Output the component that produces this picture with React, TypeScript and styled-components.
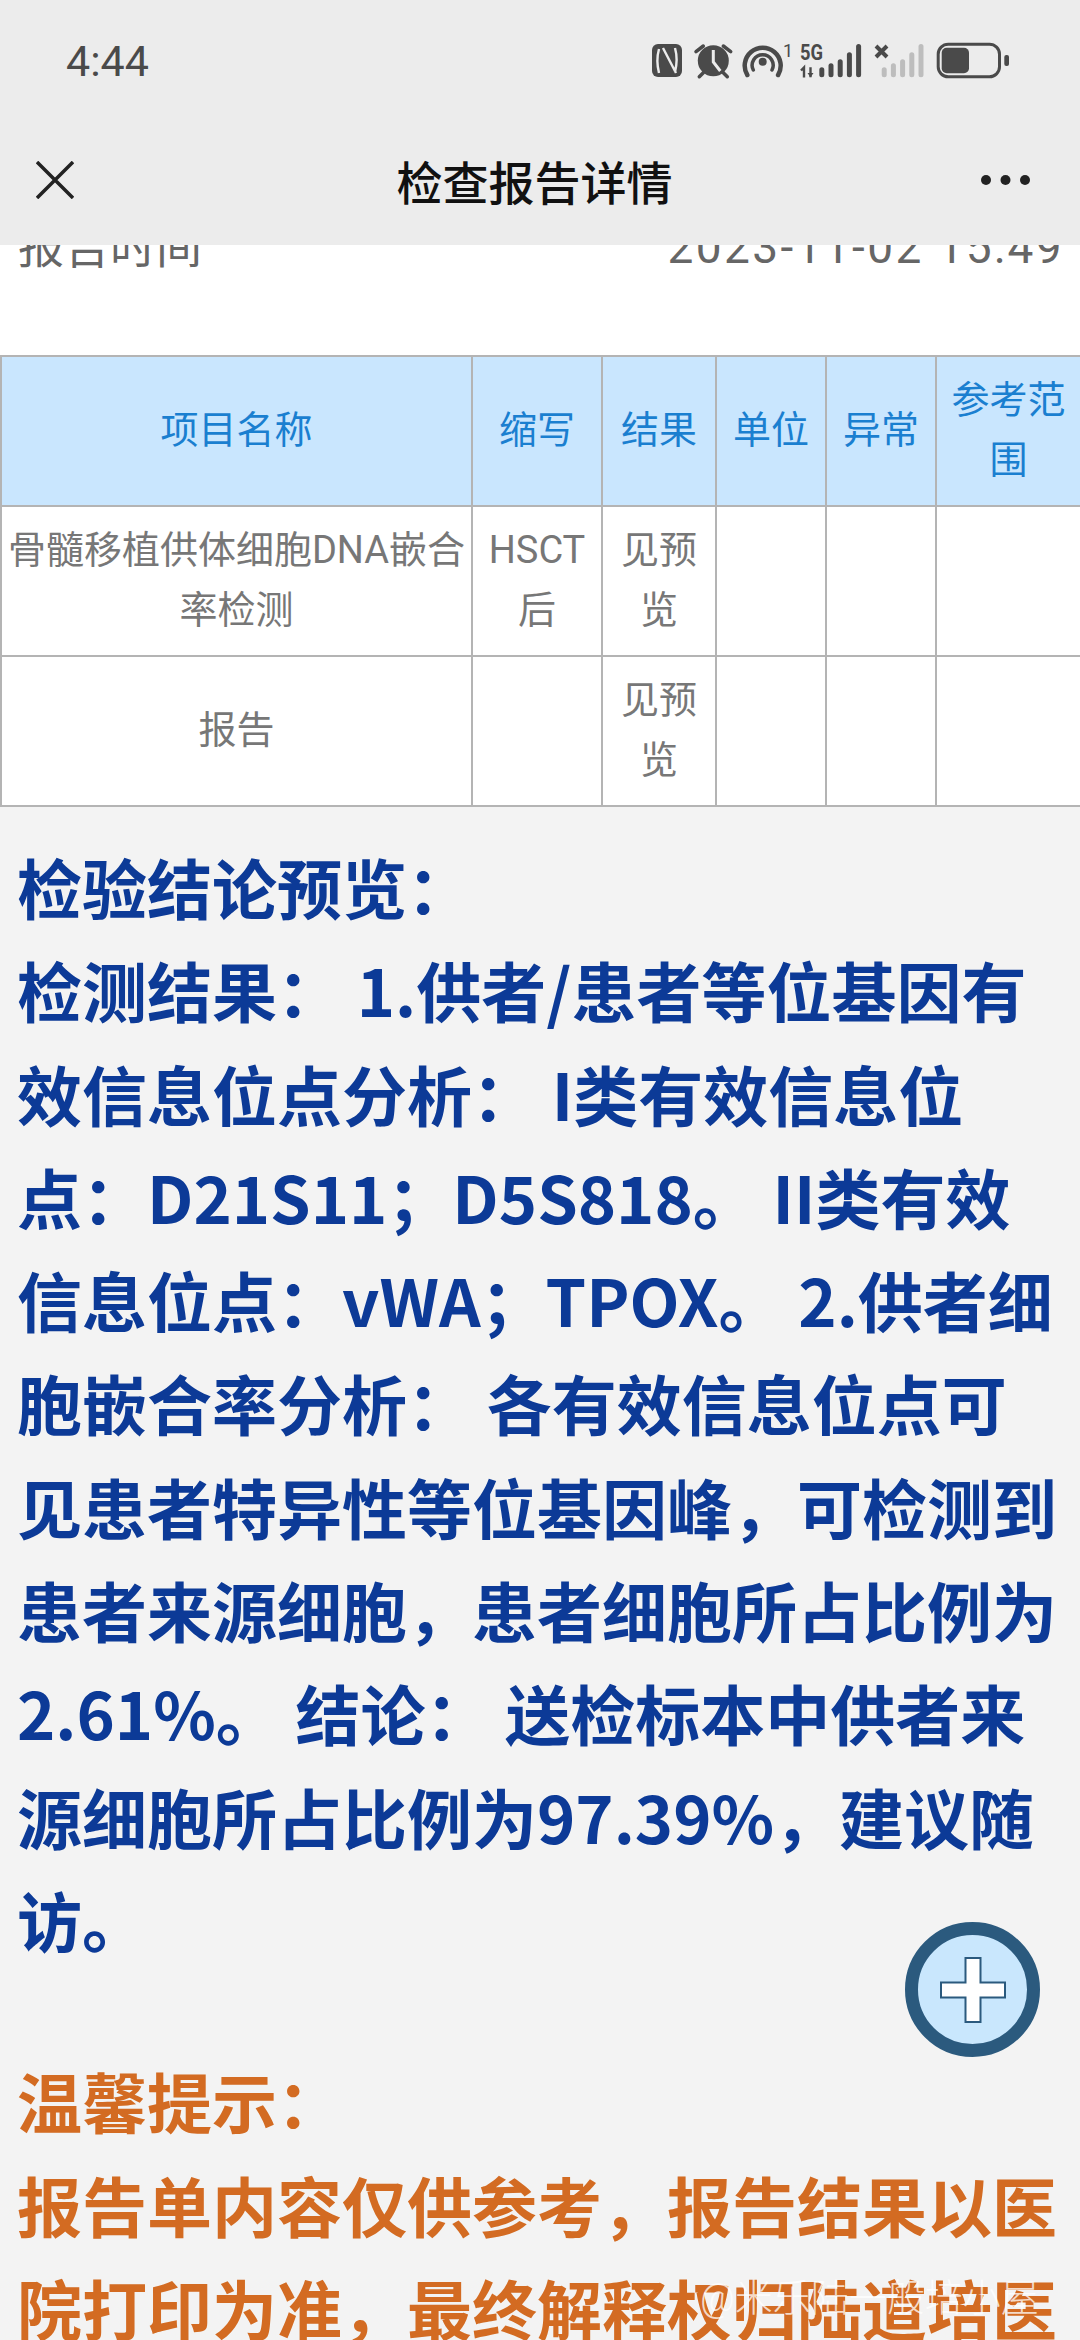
import styled, { createGlobalStyle } from "styled-components";

const GlobalStyle = createGlobalStyle`
  html, body { margin: 0; padding: 0; background: #f3f3f3; }
  body { font-family: "Roboto", "Noto Sans CJK SC", sans-serif; }
`;

const Page = styled.div`
  position: relative;
  width: 1080px;
  height: 2340px;
  overflow: hidden;
  display: flex;
  flex-direction: column;
  background: #f3f3f3;
`;
const TopBar = styled.header`
  position: relative;
  z-index: 2;
  flex: none;
  height: 245px;
  background: #ececec;
  display: flex;
  flex-direction: column;
`;
const StatusBar = styled.div`
  height: 122px;
  padding: 0 68px 0 66px;
  display: flex;
  align-items: center;
  justify-content: space-between;
`;
const Time = styled.span`
  font-family: "Roboto", sans-serif;
  font-size: 43px;
  color: #4a4a4a;
`;
const NavBar = styled.div`
  flex: 1;
  padding: 0 50px 8px 36px;
  display: flex;
  align-items: center;
  justify-content: space-between;
`;
const Title = styled.h1`
  margin: 0 0 0 14px;
  font-size: 46px;
  font-weight: 500;
  color: #111;
  font-family: "Noto Sans CJK SC", sans-serif;
`;
const Scroller = styled.main`
  flex: 1;
  min-height: 0;
  overflow: hidden;
`;
const InfoBlock = styled.section`
  margin-top: -28px;
  height: 138px;
  background: #fff;
  padding: 0 16px 0 18px;
  display: flex;
  justify-content: space-between;
  align-items: baseline;
  font-size: 46px;
  line-height: 60px;
  color: #666;
`;
const InfoValue = styled.span`
  letter-spacing: 2.4px;
`;
const ReportTable = styled.table`
  width: 1080px;
  table-layout: fixed;
  border-collapse: collapse;
  background: #fff;
`;
const HeadCell = styled.th`
  height: 150px;
  padding: 0 8px 2px;
  box-sizing: border-box;
  background: #c9e6fe;
  border: 2px solid #b4b4b4;
  color: #1a7fd0;
  font-size: 38px;
  font-weight: 400;
  line-height: 60px;
  text-align: center;
`;
const Cell = styled.td`
  height: 150px;
  padding: 0 3px 3px;
  box-sizing: border-box;
  border: 2px solid #b4b4b4;
  color: #777;
  font-size: 38px;
  line-height: 60px;
  text-align: center;
`;
const Notes = styled.section`
  padding: 28px 20px 0 17px;
`;
const NoteText = styled.p<{ $tone: string }>`
  margin: 0 0 78px;
  color: ${(p) => p.$tone};
  font-size: 65px;
  font-weight: 700;
  line-height: 103.3px;
  font-family: "Noto Sans CJK SC", sans-serif;
`;
const Fab = styled.button`
  position: absolute;
  z-index: 1;
  left: 905px;
  top: 1922px;
  width: 135px;
  height: 135px;
  padding: 0;
  box-sizing: border-box;
  border: 13px solid #2b5a7e;
  border-radius: 50%;
  background: #c9e7fd;
  display: flex;
  align-items: center;
  justify-content: center;
`;
const Watermark = styled.span`
  position: absolute;
  z-index: 1;
  left: 700px;
  top: 2279px;
  font-size: 38px;
  line-height: 38px;
  font-weight: 300;
  color: rgba(255, 255, 255, 0.75);
  white-space: nowrap;
`;

const iconFill = "#4a4a4a";
const idleFill = "#bdbdbd";
const barTops = [27.3, 23.3, 19.3, 12.3, 4];

function SignalBars({ x, color }: { x: number; color: string }) {
  return (
    <>
      {barTops.map((top, i) => (
        <rect key={i} x={x + i * 9.2} y={top} width="5" height={37.3 - top} rx="2.5" fill={color} />
      ))}
    </>
  );
}

function StatusIcons() {
  return (
    <svg width="362" height="42" viewBox="0 0 362 42" fill="none">
      {/* nfc */}
      <rect x="2" y="4" width="30" height="33" rx="6" fill={iconFill} />
      <path d="M9 9c-2 7-2 16 0 24M13 8l13 25M25 8c2 7 2 16 0 24" stroke="#ececec" strokeWidth="2.4" />
      {/* alarm */}
      <circle cx="63.3" cy="20.7" r="15.5" fill={iconFill} />
      <path d="M63.3 10v12l7 9" stroke="#ececec" strokeWidth="3" />
      <path d="M46 11.7L53.3 6M80.7 11.7L73.3 6M49.3 36.7l4-4M77.3 36.7l-4-4" stroke={iconFill} strokeWidth="3.5" strokeLinecap="round" />
      {/* hotspot */}
      <path d="M97.3 35a18 18 0 1 1 30.8 0" stroke={iconFill} strokeWidth="4.5" strokeLinecap="round" />
      <path d="M103.3 30a10.5 10.5 0 1 1 18.7 0" stroke={iconFill} strokeWidth="3.5" strokeLinecap="round" />
      <circle cx="112.7" cy="21.7" r="4" fill={iconFill} />
      <text x="133" y="17" fontSize="18" fill={iconFill} fontFamily="Roboto">1</text>
      {/* 5g signal */}
      <text x="150" y="20" fontSize="22" fontWeight="700" fill={iconFill} fontFamily="Roboto" textLength="23" lengthAdjust="spacingAndGlyphs">5G</text>
      <path d="M151 30.5l3-3v10M160.5 27.3v10" stroke={iconFill} strokeWidth="2.4" />
      <path d="M157.5 33h6l-3 4.3z" fill={iconFill} />
      <SignalBars x={169.3} color={iconFill} />
      {/* second sim, no service */}
      <path d="M226 6l11 11M237 6l-11 11" stroke={iconFill} strokeWidth="4" />
      <SignalBars x={231.7} color={idleFill} />
      {/* battery */}
      <rect x="288.2" y="4.2" width="61.3" height="32.6" rx="10" stroke={iconFill} strokeWidth="3" />
      <rect x="291.7" y="7.7" width="27.3" height="25.6" rx="5" fill={iconFill} />
      <rect x="354.3" y="15" width="4.7" height="11" rx="2" fill={iconFill} />
    </svg>
  );
}

const columns = [471, 130, 114, 110, 110, 145];

export default function App() {
  return (
    <>
      <GlobalStyle />
      <Page>
        <TopBar>
          <StatusBar>
            <Time>4:44</Time>
            <StatusIcons />
          </StatusBar>
          <NavBar>
            <svg width="38" height="38" viewBox="0 0 38 38">
              <path d="M1 1l36 36M37 1L1 37" stroke="#222" strokeWidth="3.5" />
            </svg>
            <Title>检查报告详情</Title>
            <svg width="49" height="10" viewBox="0 0 49 10" fill="#222">
              <circle cx="5" cy="5" r="5" />
              <circle cx="24.5" cy="5" r="5" />
              <circle cx="44" cy="5" r="5" />
            </svg>
          </NavBar>
        </TopBar>
        <Scroller>
          <InfoBlock>
            <span>报告时间</span>
            <InfoValue>2023-11-02 15:49</InfoValue>
          </InfoBlock>
          <ReportTable>
            <colgroup>
              {columns.map((w, i) => (
                <col key={i} style={{ width: w }} />
              ))}
            </colgroup>
            <thead>
              <tr>
                <HeadCell>项目名称</HeadCell>
                <HeadCell>缩写</HeadCell>
                <HeadCell>结果</HeadCell>
                <HeadCell>单位</HeadCell>
                <HeadCell>异常</HeadCell>
                <HeadCell>参考范围</HeadCell>
              </tr>
            </thead>
            <tbody>
              <tr>
                <Cell>骨髓移植供体细胞DNA嵌合率检测</Cell>
                <Cell>HSCT后</Cell>
                <Cell>见预览</Cell>
                <Cell />
                <Cell />
                <Cell />
              </tr>
              <tr>
                <Cell>报告</Cell>
                <Cell />
                <Cell>见预览</Cell>
                <Cell />
                <Cell />
                <Cell />
              </tr>
            </tbody>
          </ReportTable>
          <Notes>
            <NoteText $tone="#0c3a97">
              检验结论预览：
              <br />
              检测结果： 1.供者/患者等位基因有效信息位点分析： I类有效信息位点：D21S11；D5S818。 II类有效信息位点：vWA；TPOX。 2.供者细胞嵌合率分析： 各有效信息位点可见患者特异性等位基因峰，可检测到患者来源细胞，患者细胞所占比例为2.61%。 结论： 送检标本中供者来源细胞所占比例为97.39%，建议随访。
            </NoteText>
            <NoteText $tone="#d36b22">
              温馨提示：
              <br />
              报告单内容仅供参考，报告结果以医院打印为准，最终解释权归陆道培医院所有。
            </NoteText>
          </Notes>
        </Scroller>
        <Fab aria-label="add">
          <svg width="66" height="66" viewBox="0 0 66 66">
            <path d="M25.5 1h15v24.5H65v15H40.5V65h-15V40.5H1v-15h24.5z" fill="#fff" stroke="#2b5a7e" strokeWidth="2" />
          </svg>
        </Fab>
        <Watermark>@米乐陆一般培小屋</Watermark>
      </Page>
    </>
  );
}
